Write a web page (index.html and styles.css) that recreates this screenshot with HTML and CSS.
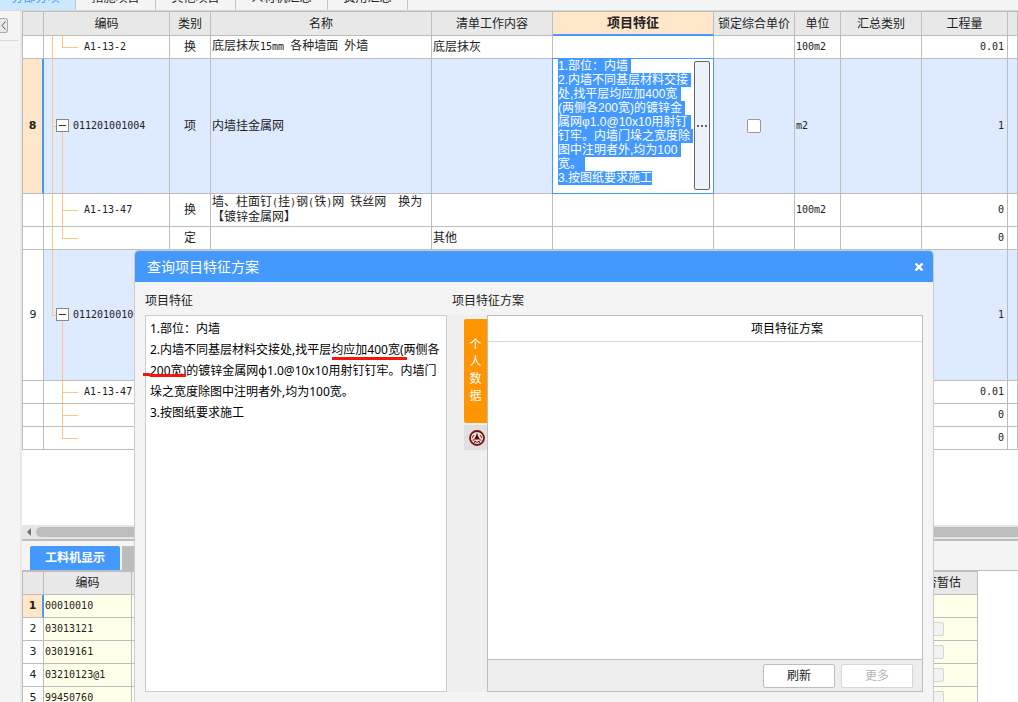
FILE: index.html
```html
<!DOCTYPE html>
<html lang="zh-CN">
<head>
<meta charset="utf-8">
<title>查询项目特征方案</title>
<link rel="stylesheet" href="styles.css">
</head>
<body>
<nav class="top-tabs">
  <button class="top-tab top-tab-active">分部分项</button>
  <button class="top-tab">措施项目</button>
  <button class="top-tab">其他项目</button>
  <button class="top-tab top-tab-wide">人材机汇总</button>
  <button class="top-tab">费用汇总</button>
</nav>
<div class="workspace">
  <aside class="rail">
    <button class="rail-toggle" aria-label="展开"><svg width="5" height="9" viewBox="0 0 5 9"><path d="M4.500 .5L1 4.500l3.500 4" fill="none" stroke="#555"/></svg></button>
  </aside>
  <main class="panes">
    <section class="pane-upper">
      <table class="grid">
        <colgroup><col class="c-num"><col class="c-code"><col class="c-kind"><col class="c-name"><col class="c-work"><col class="c-feat"><col class="c-lock"><col class="c-unit"><col class="c-sum"><col class="c-qty"><col></colgroup>
        <thead><tr><th></th><th>编码</th><th>类别</th><th>名称</th><th>清单工作内容</th><th class="th-active">项目特征</th><th>锁定综合单价</th><th>单位</th><th>汇总类别</th><th>工程量</th><th></th></tr></thead>
        <tbody>
          <tr class="r-single"><td class="num"></td><td class="tree trunk leaf-last mono">A1-13-2</td><td class="mid">换</td><td>底层抹灰<span class="mono">15mm </span>各种墙面<span class="mono"> </span>外墙</td><td>底层抹灰</td><td></td><td></td><td class="mono">100m2</td><td></td><td class="qty mono">0.01</td><td></td></tr>
          <tr class="r-eight item"><td class="num num-active">8</td><td class="tree trunk node mono"><button class="fold" aria-label="折叠"></button>011201001004</td><td class="mid">项</td><td>内墙挂金属网</td><td></td>
            <td class="cell-edit"><div class="editor">
              <textarea class="editor-text" id="feature" aria-label="项目特征" spellcheck="false">1.部位：内墙
2.内墙不同基层材料交接处,找平层均应加400宽(两侧各200宽)的镀锌金属网φ1.0@10x10用射钉钉牢。内墙门垛之宽度除图中注明者外,均为100宽。
3.按图纸要求施工</textarea>
              <button class="editor-more" aria-label="更多选项"><svg width="10" height="2" viewBox="0 0 10 2"><path d="M0 0h2v2H0zM4 0h2v2H4zM8 0h2v2H8z" fill="#666"/></svg></button>
            </div></td>
            <td class="mid"><input type="checkbox" class="check" aria-label="锁定综合单价"></td><td class="mono">m2</td><td></td><td class="qty mono">1</td><td></td></tr>
          <tr class="r-double"><td class="num"></td><td class="tree trunk leaf mono">A1-13-47</td><td class="mid">换</td><td>墙、柱面钉<span class="mono">(</span>挂<span class="mono">)</span>钢<span class="mono">(</span>铁<span class="mono">)</span>网<span class="mono"> </span>铁丝网&emsp;换为<br>【镀锌金属网】</td><td></td><td></td><td></td><td class="mono">100m2</td><td></td><td class="qty mono">0</td><td></td></tr>
          <tr class="r-single"><td class="num"></td><td class="tree trunk leaf-last"></td><td class="mid">定</td><td></td><td>其他</td><td></td><td></td><td></td><td></td><td class="qty mono">0</td><td></td></tr>
          <tr class="r-nine item"><td class="num">9</td><td class="tree trunk-end node mono"><button class="fold" aria-label="折叠"></button>011201001005</td><td class="mid">项</td><td></td><td></td><td></td><td></td><td></td><td></td><td class="qty mono">1</td><td></td></tr>
          <tr class="r-single"><td class="num"></td><td class="tree leaf mono">A1-13-47</td><td></td><td></td><td></td><td></td><td></td><td></td><td></td><td class="qty mono">0.01</td><td></td></tr>
          <tr class="r-single"><td class="num"></td><td class="tree leaf"></td><td></td><td></td><td></td><td></td><td></td><td></td><td></td><td class="qty mono">0</td><td></td></tr>
          <tr class="r-single"><td class="num"></td><td class="tree leaf-last"></td><td></td><td></td><td></td><td></td><td></td><td></td><td></td><td class="qty mono">0</td><td></td></tr>
        </tbody>
      </table>
      <div class="scroll"><svg class="scroll-arrow" width="4" height="8" viewBox="0 0 4 8"><path d="M4 0v8L0 4z" fill="#6f6f78"/></svg><div class="scroll-thumb"></div></div>
    </section>
    <section class="pane-lower">
      <div class="lower-tabs"><button class="lower-tab">工料机显示</button><button class="lower-tab-rest" aria-label="其他页签"></button></div>
      <table class="grid grid-lower">
        <colgroup><col class="c-num"><col class="c-code2"><col><col class="c-est"></colgroup>
        <thead><tr><th></th><th>编码</th><th></th><th>是否暂估</th></tr></thead>
        <tbody>
          <tr class="r-single"><td class="num num-active">1</td><td class="mono">00010010</td><td></td><td></td></tr>
          <tr class="r-single"><td class="num">2</td><td class="mono">03013121</td><td></td><td class="mid"><input type="checkbox" class="check" disabled aria-label="是否暂估"></td></tr>
          <tr class="r-single"><td class="num">3</td><td class="mono">03019161</td><td></td><td class="mid"><input type="checkbox" class="check" disabled aria-label="是否暂估"></td></tr>
          <tr class="r-single"><td class="num">4</td><td class="mono">03210123@1</td><td></td><td class="mid"><input type="checkbox" class="check" disabled aria-label="是否暂估"></td></tr>
          <tr class="r-single"><td class="num">5</td><td class="mono">99450760</td><td></td><td class="mid"><input type="checkbox" class="check" disabled aria-label="是否暂估"></td></tr>
        </tbody>
      </table>
    </section>
  </main>
</div>

<div class="dialog" role="dialog" aria-labelledby="dialog-title">
  <header class="dialog-head">
    <h1 class="dialog-title" id="dialog-title">查询项目特征方案</h1>
    <button class="dialog-close" aria-label="关闭"><svg width="10" height="8" viewBox="0 0 10 8"><path d="M1.500 .5l7 7M8.500 .5l-7 7" fill="none" stroke="#fff" stroke-width="2.400"/></svg></button>
  </header>
  <div class="dialog-body">
    <div class="col-left">
      <label class="caption" for="plan-text">项目特征</label>
      <div class="note">
        <textarea class="note-text" id="plan-text" spellcheck="false">1.部位：内墙
2.内墙不同基层材料交接处,找平层均应加400宽(两侧各200宽)的镀锌金属网φ1.0@10x10用射钉钉牢。内墙门垛之宽度除图中注明者外,均为100宽。
3.按图纸要求施工</textarea>
        <svg class="marks" width="270" height="64" viewBox="0 0 270 64"><path d="M190 42.500h75M1 58.500h6l2 1h35" fill="none" stroke="#f5150c" stroke-width="3"/></svg>
      </div>
    </div>
    <div class="col-right">
      <div class="caption caption-plan">项目特征方案</div>
      <div class="plan">
        <div class="side-tabs">
          <button class="side-tab">个<br>人<br>数<br>据</button>
          <button class="side-logo" aria-label="企业数据"><svg width="16" height="16" viewBox="0 0 16 16"><circle cx="8" cy="8" r="7" fill="#f0e2e0" stroke="#74140e" stroke-width="1.800"/><path d="M8 2.500l1 3.500 2 3.500H5L7 6z" fill="#4d0a06"/><path d="M3.500 10h2M10.500 10h2M5 5L3 8M11 5l2 3M5.500 13l.5-2 2 1.500 2-1.500.5 2" fill="none" stroke="#74140e"/></svg></button>
        </div>
        <div class="plan-box">
          <div class="plan-head">项目特征方案</div>
          <div class="plan-list"></div>
          <footer class="plan-foot"><button class="btn">刷新</button><button class="btn" disabled>更多</button></footer>
        </div>
      </div>
    </div>
  </div>
</div>
<script src="script.js"></script>
</body>
</html>
```
FILE: styles.css
```css
* { box-sizing: border-box; }
body {
  margin: 0;
  height: 100vh;
  display: flex;
  flex-direction: column;
  overflow: hidden;
  background: #f4f4f4;
  color: #222;
  font: 12px/14px "Liberation Sans", "Noto Sans CJK SC", sans-serif;
}
button, textarea, input { margin: 0; padding: 0; border: 0; font: inherit; color: inherit; background: none; }
.mono { font-family: "DejaVu Sans Mono", "Noto Sans CJK SC", monospace; font-size: 10px; }

.top-tabs {
  flex: none;
  height: 11px;
  display: flex;
  align-items: flex-end;
  overflow: hidden;
  border-bottom: 1px solid #d9d9d9;
}
.top-tab {
  flex: none;
  width: 80px;
  height: 24px;
  border-right: 1px solid #c4c4c4;
}
.top-tab-wide { width: 92px; }
.top-tab-active { width: 76px; padding-right: 4px; background: #cbe8ff; color: #4499ff; }

.workspace { flex: 1; min-height: 0; display: flex; }
.rail { flex: none; width: 22px; border-right: 2px solid #e9e9e9; }
.rail-toggle {
  display: flex;
  align-items: center;
  justify-content: center;
  width: 8px;
  height: 15px;
  margin-top: 7px;
  border: 1px solid #aaa;
  border-left: 0;
  border-radius: 0 3px 3px 0;
  background: #e8e8e8;
}
.rail::after { content: ""; display: block; width: 18px; height: 1px; margin-top: 7px; background: #d9d9d9; }
.panes { flex: 1; min-width: 0; display: flex; flex-direction: column; }
.pane-upper { flex: 1; min-height: 0; display: flex; flex-direction: column; background: #fff; border-bottom: 2px solid #bdbdbd; }

.grid { width: 100%; table-layout: fixed; border-spacing: 0; border-left: 1px solid #bdbdbd; border-top: 1px solid #bdbdbd; }
.grid th, .grid td { padding: 0 1px 1px; border-right: 1px solid #bdbdbd; border-bottom: 1px solid #bdbdbd; white-space: nowrap; overflow: hidden; text-align: left; }
.grid th { height: 24px; padding: 0; background: #e8e8e8; font-weight: normal; text-align: center; }
.grid .th-active { background: #ffe6c9; border-bottom: 2px solid #4499ff; font-weight: bold; font-size: 13px; }
.c-num { width: 21px; }
.c-code { width: 126px; }
.c-kind { width: 41px; }
.c-name { width: 221px; }
.c-work { width: 121px; }
.c-feat { width: 161px; }
.c-lock { width: 81px; }
.c-unit { width: 46px; }
.c-sum { width: 81px; }
.c-qty { width: 86px; }
.c-code2 { width: 88px; }
.c-est { width: 81px; }
.r-single { height: 23px; }
.r-double { height: 33px; }
.r-eight { height: 135px; }
.r-nine { height: 131px; }
.item { background: #deeaff; }
.grid .num { padding: 0; background: #fff; text-align: center; font: 11px/14px "DejaVu Sans", sans-serif; }
.grid .num-active { background: #ffe6c9; border-right: 2px solid #4499ff; font-weight: bold; }
.grid .mid { text-align: center; padding: 0; }
.grid .qty { text-align: right; padding-right: 3px; }

/* Tree guides: trunk, branch and twig are three gradient strips */
.grid .tree {
  --line: linear-gradient(#ffc680, #ffc680);
  --trunk: 0;
  --branch: 0;
  --twig: 16px;
  --twig-x: 18px;
  --branch-y: 0;
  padding-left: 40px;
  background-image: var(--line), var(--line), var(--line);
  background-repeat: no-repeat;
  background-size: 1px var(--trunk), 1px var(--branch), var(--twig) 1px;
  background-position: 8px 0, 18px var(--branch-y), var(--twig-x) 50%;
}
.grid .trunk { --trunk: 100%; }
.grid .trunk-end { --trunk: 50%; }
.grid .leaf { --branch: 100%; }
.grid .leaf-last { --branch: 50%; }
.grid .node { --branch: 50%; --branch-y: 100%; --twig: 4px; --twig-x: 8px; padding-left: 12px; }
.fold {
  width: 13px;
  height: 13px;
  margin-right: 4px;
  border: 1px solid #888;
  background: linear-gradient(#333, #333) center / 7px 1px no-repeat #fff;
  vertical-align: middle;
}
.check {
  appearance: none;
  display: inline-block;
  width: 14px;
  height: 14px;
  border: 1px solid #999;
  border-radius: 2px;
  background: #fff;
  vertical-align: middle;
}
.check:disabled { border-color: #d6d6d6; background: #f2f2f2; }

.grid .cell-edit { position: relative; overflow: visible; }
.editor { position: absolute; inset: -1px; display: flex; padding: 0 3px 0 5px; border: 1px solid #4499ff; background: #fff; }
.editor-text { flex: 1; min-width: 0; padding-right: 2px; resize: none; outline: 0; overflow: hidden; line-height: 14px; }
.editor-text::selection { background: #4499ff; color: #fff; }
.editor-more { flex: none; width: 16px; margin: 2px 0 3px; display: flex; align-items: center; justify-content: center; border: 1px solid #666; border-radius: 2px; background: #edf1fb; }

.scroll { flex: none; height: 14px; margin-top: auto; display: flex; align-items: center; gap: 5px; padding-left: 5px; background: #e6e6e6; }
.scroll-thumb { flex: 1; height: 10px; border-radius: 5px 0 0 5px; background: #bdbdbd; }

.pane-lower { flex: none; height: 161px; overflow: hidden; background: #fff; }
.lower-tabs { display: flex; align-items: flex-end; gap: 2px; height: 30px; padding-left: 8px; border-bottom: 1px solid #bdbdbd; background: #f4f4f4; }
.lower-tab { width: 90px; height: 24px; border-radius: 2px 2px 0 0; background: #4499ff; color: #fff; font-weight: bold; }
.lower-tab-rest { width: 90px; height: 24px; background: #bdbdbd; }
.grid-lower { width: calc(100% - 40px); }
.grid-lower th { height: 23px; }
.grid-lower td { background: #ffffe9; }

.dialog {
  position: absolute;
  inset: 250px 84px 0 134px;
  display: flex;
  flex-direction: column;
  border: 1px solid #ccc;
  border-bottom: 0;
  border-radius: 5px 5px 0 0;
  background: #f4f4f4;
}
.dialog-head { flex: none; height: 31px; display: flex; align-items: center; justify-content: space-between; padding: 0 9px 0 12px; border-radius: 4px 4px 0 0; background: #4499ff; color: #fff; }
.dialog-title { margin: 0; font-size: 14px; line-height: 20px; font-weight: normal; }
.dialog-close { display: flex; }
.dialog-body { flex: 1; min-height: 0; display: flex; padding: 9px 10px 10px; }
.col-left { flex: 302 1 0; display: flex; flex-direction: column; }
.col-right { flex: 476 1 0; display: flex; flex-direction: column; }
.caption { flex: none; height: 24px; line-height: 20px; }
.caption-plan { padding-left: 5px; }
.note { flex: 1; min-height: 0; position: relative; border: 1px solid #ccc; background: #fff; }
.note-text { display: block; width: 100%; height: 100%; padding: 2px 4px; resize: none; outline: 0; color: #000; font-family: "Noto Sans", "Noto Sans CJK SC", sans-serif; line-height: 21px; }
.marks { position: absolute; left: -4px; top: 0; pointer-events: none; }
.plan { flex: 1; min-height: 0; display: flex; background: #efefef; }
.side-tabs { flex: none; width: 40px; padding: 4px 0 0 17px; display: flex; flex-direction: column; gap: 2px; }
.side-tab { height: 104px; border-radius: 2px 0 0 2px; background: #ff9500; color: #fff; line-height: 17px; }
.side-logo { height: 25px; display: flex; align-items: center; justify-content: center; padding-left: 3px; background: #e0e0e0; }
.plan-box { flex: 1; display: flex; flex-direction: column; border: 1px solid #bdbdbd; background: #fff; }
.plan-head { flex: none; padding: 6px 0 5px 164px; border-bottom: 1px solid #d6d6d6; color: #000; text-align: center; }
.plan-list { flex: 1; }
.plan-foot { flex: none; display: flex; justify-content: flex-end; gap: 6px; padding: 4px 9px 3px; border-top: 1px solid #bdbdbd; background: #ededed; }
.btn { width: 72px; height: 24px; border: 1px solid #bdbdbd; border-radius: 2px; background: #fff; }
.btn:disabled { border-color: #d6d6d6; color: #b5b5b5; }
```
FILE: script.js
```js
const feature = document.getElementById('feature');
feature.focus();
feature.select();
```
